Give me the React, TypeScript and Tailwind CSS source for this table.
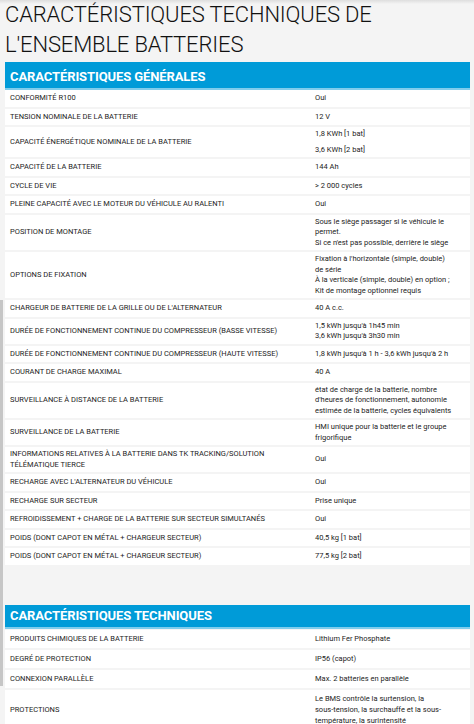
type Row = { label: string[]; value: string[]; split?: boolean };

const generales: Row[] = [
  { label: ["CONFORMITÉ R100"], value: ["Oui"] },
  { label: ["TENSION NOMINALE DE LA BATTERIE"], value: ["12 V"] },
  {
    label: ["CAPACITÉ ÉNERGÉTIQUE NOMINALE DE LA BATTERIE"],
    value: ["1,8 KWh [1 bat]", "3,6 KWh [2 bat]"],
    split: true,
  },
  { label: ["CAPACITÉ DE LA BATTERIE"], value: ["144 Ah"] },
  { label: ["CYCLE DE VIE"], value: ["> 2 000 cycles"] },
  { label: ["PLEINE CAPACITÉ AVEC LE MOTEUR DU VÉHICULE AU RALENTI"], value: ["Oui"] },
  {
    label: ["POSITION DE MONTAGE"],
    value: [
      "Sous le siège passager si le véhicule le",
      "permet.",
      "Si ce n'est pas possible, derrière le siège",
    ],
  },
  {
    label: ["OPTIONS DE FIXATION"],
    value: [
      "Fixation à l'horizontale (simple, double)",
      "de série",
      "À la verticale (simple, double) en option ;",
      "Kit de montage optionnel requis",
    ],
  },
  { label: ["CHARGEUR DE BATTERIE DE LA GRILLE OU DE L'ALTERNATEUR"], value: ["40 A c.c."] },
  {
    label: ["DURÉE DE FONCTIONNEMENT CONTINUE DU COMPRESSEUR (BASSE VITESSE)"],
    value: ["1,5 kWh jusqu'à 1h45 min", "3,6 kWh jusqu'à 3h30 min"],
  },
  {
    label: ["DURÉE DE FONCTIONNEMENT CONTINUE DU COMPRESSEUR (HAUTE VITESSE)"],
    value: ["1,8 kWh jusqu'à 1 h - 3,6 kWh jusqu'à 2 h"],
  },
  { label: ["COURANT DE CHARGE MAXIMAL"], value: ["40 A"] },
  {
    label: ["SURVEILLANCE À DISTANCE DE LA BATTERIE"],
    value: [
      "état de charge de la batterie, nombre",
      "d'heures de fonctionnement, autonomie",
      "estimée de la batterie, cycles équivalents",
    ],
  },
  {
    label: ["SURVEILLANCE DE LA BATTERIE"],
    value: ["HMI unique pour la batterie et le groupe", "frigorifique"],
  },
  {
    label: ["INFORMATIONS RELATIVES À LA BATTERIE DANS TK TRACKING/SOLUTION", "TÉLÉMATIQUE TIERCE"],
    value: ["Oui"],
  },
  { label: ["RECHARGE AVEC L'ALTERNATEUR DU VÉHICULE"], value: ["Oui"] },
  { label: ["RECHARGE SUR SECTEUR"], value: ["Prise unique"] },
  { label: ["REFROIDISSEMENT + CHARGE DE LA BATTERIE SUR SECTEUR SIMULTANÉS"], value: ["Oui"] },
  { label: ["POIDS (DONT CAPOT EN MÉTAL + CHARGEUR SECTEUR)"], value: ["40,5 kg [1 bat]"] },
  { label: ["POIDS (DONT CAPOT EN MÉTAL + CHARGEUR SECTEUR)"], value: ["77,5 kg [2 bat]"] },
];

const techniques: Row[] = [
  { label: ["PRODUITS CHIMIQUES DE LA BATTERIE"], value: ["Lithium Fer Phosphate"] },
  { label: ["DEGRÉ DE PROTECTION"], value: ["IP56 (capot)"] },
  { label: ["CONNEXION PARALLÈLE"], value: ["Max. 2 batteries en parallèle"] },
  {
    label: ["PROTECTIONS"],
    value: [
      "Le BMS contrôle la surtension, la",
      "sous-tension, la surchauffe et la sous-",
      "température, la surintensité",
    ],
  },
];

function SpecRow({ row, loose }: { row: Row; loose?: boolean }) {
  const cell = loose
    ? "flex flex-col justify-center py-[3.5px] leading-[11px]"
    : "flex flex-col justify-center py-[2px] leading-[10.5px]";
  return (
    <div
      className={`grid grid-cols-[306px_1fr] bg-white ${
        loose ? "min-h-[17px]" : "min-h-[16.5px]"
      }`}
    >
      <div className={`${cell} pl-[5px]`}>
        {row.label.map((l, i) => (
          <span key={i} className="whitespace-nowrap">
            {l}
          </span>
        ))}
      </div>
      <div className={`${cell} pl-[4px] ${row.split ? "gap-[5px]" : ""}`}>
        {row.value.map((v, i) => (
          <span key={i} className="whitespace-nowrap">
            {v}
          </span>
        ))}
      </div>
    </div>
  );
}

function Section({ title, rows, first }: { title: string; rows: Row[]; first?: boolean }) {
  return (
    <section>
      <div
        className={`bg-[#009bd8] border-b-2 border-[#80cdec] flex items-end pl-[5px] pb-[3px] ${
          first ? "h-[28px]" : "h-[24px]"
        }`}
      >
        <h2 className="text-white font-bold text-[13px] leading-[16px] tracking-[-0.1px]">
          {title}
        </h2>
      </div>
      <div
        className={`flex flex-col gap-[2px] text-[7.5px] text-[#1c1c1c] ${
          first ? "pt-0" : "pt-[1px]"
        }`}
      >
        {rows.map((r, i) => (
          <SpecRow key={i} row={r} loose={!first} />
        ))}
      </div>
    </section>
  );
}

export default function App() {
  return (
    <div className="relative min-h-[724px] bg-[#f4f4f4] pl-[5px] pr-[4px] font-[Roboto,'Liberation_Sans',sans-serif] overflow-hidden">
      {/* top shadow */}
      <div className="absolute top-0 left-0 right-0 h-[4px] bg-linear-to-b from-[#dedede] to-transparent" />
      {/* side bar fragment */}
      <div className="absolute left-0 top-[300px] h-[386px] w-[3px] bg-[#c6c6c6]" />

      <h1 className="text-[22px] leading-[29.5px] font-light tracking-[-0.15px] text-[#111] pb-[3px]">
        CARACTÉRISTIQUES TECHNIQUES DE
        <br />
        L'ENSEMBLE BATTERIES
      </h1>

      <Section title="CARACTÉRISTIQUES GÉNÉRALES" rows={generales} first />

      <div className="h-[40px]" />

      <Section title="CARACTÉRISTIQUES TECHNIQUES" rows={techniques} />
    </div>
  );
}
